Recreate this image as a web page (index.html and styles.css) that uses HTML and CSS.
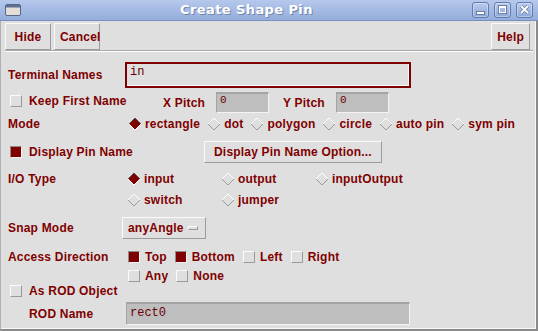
FILE: index.html
```html
<!DOCTYPE html>
<html lang="en">
<head>
    <meta charset="UTF-8">
    <meta name="viewport" content="width=device-width, initial-scale=1.0">
    <title>Create Shape Pin</title>
    <link rel="stylesheet" href="styles.css">
</head>
<body>
<div class="window">
    <div class="titlebar">
        <svg class="app-icon" width="16" height="12" viewBox="0 0 16 12">
            <rect x="0.5" y="0.5" width="15" height="11" rx="1.5" fill="#e4dfd6" stroke="#56688a"/>
            <rect x="1" y="1" width="14" height="2.5" fill="#5d6f92"/>
        </svg>
        <div class="title">Create Shape Pin</div>
        <div class="wm-buttons">
            <span class="wm-btn">
                <svg width="15" height="14" viewBox="0 0 15 14"><rect x="3.5" y="8.5" width="8" height="3" fill="#fff" stroke="#6b7fa6"/></svg>
            </span>
            <span class="wm-btn">
                <svg width="15" height="14" viewBox="0 0 15 14"><rect x="3.5" y="2.5" width="8" height="8" fill="none" stroke="#6b7fa6"/><rect x="4.5" y="3.5" width="6" height="6" fill="none" stroke="#fff"/><rect x="4" y="3" width="7" height="2" fill="#fff"/></svg>
            </span>
            <span class="wm-btn">
                <svg width="15" height="14" viewBox="0 0 15 14"><path d="M4 3 L11 10 M11 3 L4 10" stroke="#6b7fa6" stroke-width="3.4"/><path d="M4 3 L11 10 M11 3 L4 10" stroke="#fff" stroke-width="1.8"/></svg>
            </span>
        </div>
    </div>

    <div class="client">
        <div class="toolbar">
            <button class="btn btn-tool">Hide</button>
            <button class="btn btn-tool">Cancel</button>
            <span class="spacer"></span>
            <button class="btn btn-tool">Help</button>
        </div>
        <div class="separator"></div>

        <div class="form">
            <div class="row row-terminal">
                <span class="label label-terminal">Terminal Names</span>
                <div class="field field-name">in</div>
            </div>

            <div class="row row-pitch">
                <span class="check check-left keep"><span class="box"></span>Keep First Name</span>
                <span class="pitch-label">X Pitch</span>
                <div class="field field-grey field-pitch">0</div>
                <span class="pitch-label pitch-y">Y Pitch</span>
                <div class="field field-grey field-pitch">0</div>
            </div>

            <div class="row row-mode">
                <span class="label label-mode">Mode</span>
                <div class="options">
                    <span class="opt"><svg class="diamond" viewBox="0 0 14 14"><path d="M7 1 L13 7 L7 13 L1 7 Z" fill="#7f0000"/><path d="M1 7 L7 1 L13 7" fill="none" stroke="#5a4a4a"/><path d="M1 7 L7 13 L13 7" fill="none" stroke="#fff"/></svg>rectangle</span>
                    <span class="opt"><svg class="diamond" viewBox="0 0 14 14"><path d="M1 7 L7 1 L13 7" fill="none" stroke="#fff"/><path d="M1 7 L7 13 L13 7" fill="none" stroke="#9a9a9a"/></svg>dot</span>
                    <span class="opt"><svg class="diamond" viewBox="0 0 14 14"><path d="M1 7 L7 1 L13 7" fill="none" stroke="#fff"/><path d="M1 7 L7 13 L13 7" fill="none" stroke="#9a9a9a"/></svg>polygon</span>
                    <span class="opt"><svg class="diamond" viewBox="0 0 14 14"><path d="M1 7 L7 1 L13 7" fill="none" stroke="#fff"/><path d="M1 7 L7 13 L13 7" fill="none" stroke="#9a9a9a"/></svg>circle</span>
                    <span class="opt"><svg class="diamond" viewBox="0 0 14 14"><path d="M1 7 L7 1 L13 7" fill="none" stroke="#fff"/><path d="M1 7 L7 13 L13 7" fill="none" stroke="#9a9a9a"/></svg>auto pin</span>
                    <span class="opt"><svg class="diamond" viewBox="0 0 14 14"><path d="M1 7 L7 1 L13 7" fill="none" stroke="#fff"/><path d="M1 7 L7 13 L13 7" fill="none" stroke="#9a9a9a"/></svg>sym pin</span>
                </div>
            </div>

            <div class="row row-display">
                <span class="check check-left display"><span class="box checked"></span>Display Pin Name</span>
                <button class="btn btn-option">Display Pin Name Option...</button>
            </div>

            <div class="row row-io">
                <span class="label label-io">I/O Type</span>
                <div class="io-grid">
                    <span class="opt"><svg class="diamond" viewBox="0 0 14 14"><path d="M7 1 L13 7 L7 13 L1 7 Z" fill="#7f0000"/><path d="M1 7 L7 1 L13 7" fill="none" stroke="#5a4a4a"/><path d="M1 7 L7 13 L13 7" fill="none" stroke="#fff"/></svg>input</span>
                    <span class="opt"><svg class="diamond" viewBox="0 0 14 14"><path d="M1 7 L7 1 L13 7" fill="none" stroke="#fff"/><path d="M1 7 L7 13 L13 7" fill="none" stroke="#9a9a9a"/></svg>output</span>
                    <span class="opt"><svg class="diamond" viewBox="0 0 14 14"><path d="M1 7 L7 1 L13 7" fill="none" stroke="#fff"/><path d="M1 7 L7 13 L13 7" fill="none" stroke="#9a9a9a"/></svg>inputOutput</span>
                </div>
            </div>
            <div class="row row-io2">
                <span class="label label-io"></span>
                <div class="io-grid">
                    <span class="opt"><svg class="diamond" viewBox="0 0 14 14"><path d="M1 7 L7 1 L13 7" fill="none" stroke="#fff"/><path d="M1 7 L7 13 L13 7" fill="none" stroke="#9a9a9a"/></svg>switch</span>
                    <span class="opt"><svg class="diamond" viewBox="0 0 14 14"><path d="M1 7 L7 1 L13 7" fill="none" stroke="#fff"/><path d="M1 7 L7 13 L13 7" fill="none" stroke="#9a9a9a"/></svg>jumper</span>
                </div>
            </div>

            <div class="row row-snap">
                <span class="label label-snap">Snap Mode</span>
                <div class="btn dropdown">anyAngle<span class="indicator"></span></div>
            </div>

            <div class="row row-access">
                <span class="label label-access">Access Direction</span>
                <div class="checks">
                    <span class="check"><span class="box checked"></span>Top</span>
                    <span class="check"><span class="box checked"></span>Bottom</span>
                    <span class="check"><span class="box"></span>Left</span>
                    <span class="check"><span class="box"></span>Right</span>
                </div>
            </div>
            <div class="row row-access2">
                <span class="label label-access"></span>
                <div class="checks">
                    <span class="check"><span class="box"></span>Any</span>
                    <span class="check"><span class="box"></span>None</span>
                </div>
            </div>

            <div class="row row-rod">
                <span class="check check-left"><span class="box"></span>As ROD Object</span>
            </div>

            <div class="row row-rodname">
                <span class="label label-rodname">ROD Name</span>
                <div class="field field-grey field-rod">rect0</div>
            </div>
        </div>
    </div>
</div>
</body>
</html>
```

FILE: styles.css
```css
* {
    box-sizing: border-box;
}

body {
    margin: 0;
    background-color: #dfdfdf;
    font-family: "Liberation Sans", Arial, sans-serif;
    font-size: 12px;
    font-weight: bold;
    letter-spacing: 0.2px;
    color: #7f0000;
}

.window {
    width: 538px;
    height: 331px;
    display: flex;
    flex-direction: column;
    overflow: hidden;
}

/* title bar */
.titlebar {
    height: 21px;
    display: flex;
    align-items: center;
    background: linear-gradient(to bottom, #b6c8ec, #94addb);
    border-bottom: 1px solid #7890c0;
}

.app-icon {
    margin-left: 5px;
    margin-top: -1px;
}

.title {
    flex: 1;
    text-align: center;
    font-family: "DejaVu Sans", sans-serif;
    font-size: 13px;
    font-weight: bold;
    letter-spacing: 0.4px;
    color: #fff;
    text-shadow: 1px 1px 0 #7083aa;
    margin-top: -1px;
}

.wm-buttons {
    display: flex;
    gap: 5px;
    margin-right: 5px;
}

.wm-btn {
    width: 17px;
    height: 16px;
    border: 1px solid #5f7bb0;
    border-radius: 3px;
    background: linear-gradient(to bottom, #b9cbee, #8ea8d8);
    box-shadow: inset 0 0 0 1px rgba(255, 255, 255, 0.35);
    display: flex;
}

/* client area */
.client {
    flex: 1;
    display: flex;
    flex-direction: column;
    border-left: 1px solid #b0b0b0;
    border-right: 2px solid #8a8a8a;
    border-bottom: 2px solid #8a8a8a;
    box-shadow: inset -1px -1px 0 #f6f6f6;
}

.toolbar {
    display: flex;
    gap: 3px;
    padding: 2px 6px 0 4px;
}

.spacer {
    flex: 1;
}

.btn {
    font-family: inherit;
    font-size: 12px;
    font-weight: bold;
    letter-spacing: 0.2px;
    color: #7f0000;
    background-color: #dfdfdf;
    border: 1px solid;
    border-color: #fafafa #9c9c9c #9c9c9c #fafafa;
    margin: 0;
    padding: 0;
}

.btn-tool {
    height: 27px;
    min-width: 30px;
    padding: 0 5px;
}

.btn-tool:first-child,
.btn-tool:nth-child(2) {
    width: 46px;
}

.separator {
    margin: 0 3px 0 4px;
    border-top: 1px solid #a8a8a8;
    border-bottom: 1px solid #fff;
}

/* form */
.form {
    display: flex;
    flex-direction: column;
    padding-left: 7px;
}

.row {
    display: flex;
    align-items: center;
}

.label {
    flex: none;
}

.row-terminal { margin-top: 10px; height: 26px; }
.row-pitch    { margin-top: 4px;  height: 21px; }
.row-mode     { margin-top: 3px;  height: 15px; }
.row-display  { margin-top: 10px; height: 22px; }
.row-io       { margin-top: 9px;  height: 14px; }
.row-io2      { margin-top: 6px;  height: 15px; }
.row-snap     { margin-top: 10px; height: 22px; }
.row-access   { margin-top: 11px; height: 13px; }
.row-access2  { margin-top: 7px;  height: 12px; }
.row-rod      { margin-top: 3px;  height: 12px; }
.row-rodname  { margin-top: 5px;  height: 23px; }

.label-terminal { width: 117px; }
.label-mode     { width: 120px; }
.label-io       { width: 119px; }
.label-snap     { width: 114px; }
.label-access   { width: 120px; }
.label-rodname  { width: 97px; margin-left: 21px; }

/* fields */
.field {
    font-family: "Liberation Mono", "Courier New", monospace;
    font-weight: normal;
    letter-spacing: 0;
    color: #6a0000;
}

.field-name {
    width: 286px;
    height: 26px;
    border: 2px solid #7f0000;
    box-shadow: inset -1px -1px 0 #fff;
    padding: 1px 3px;
    font-size: 12px;
}

.field-grey {
    background-color: #bebebe;
    border-top: 2px solid #a4a4a4;
    border-left: 1px solid #a4a4a4;
    border-right: 1px solid #f4f4f4;
    border-bottom: 1px solid #f4f4f4;
}

.field-pitch {
    width: 53px;
    height: 21px;
    padding: 0 3px;
    font-size: 11px;
}

.field-rod {
    width: 284px;
    height: 23px;
    padding: 2px 3px;
    font-size: 12px;
}

.pitch-label {
    width: 53px;
}

.pitch-y {
    margin-left: 14px;
}

/* check boxes */
.check {
    display: flex;
    align-items: center;
    gap: 5px;
}

.check-left {
    margin-left: 2px;
    gap: 7px;
}

.keep {
    width: 153px;
    align-self: flex-start;
    margin-top: 2px;
}

.display {
    width: 194px;
}

.box {
    width: 12px;
    height: 12px;
    flex: none;
    background-color: #dfdfdf;
    border: 1px solid;
    border-color: #fbfbfb #9a9a9a #9a9a9a #fbfbfb;
}

.box.checked {
    background-color: #7f0000;
    border-color: #8c8c8c #f4f4f4 #f4f4f4 #8c8c8c;
}

.checks {
    display: flex;
    gap: 8px;
}

/* radio diamonds */
.options {
    display: flex;
    gap: 7px;
}

.opt {
    display: flex;
    align-items: center;
    gap: 3px;
}

.diamond {
    width: 14px;
    height: 14px;
    flex: none;
}

.io-grid {
    display: grid;
    grid-template-columns: 94px 94px 94px;
}

.btn-option {
    height: 22px;
    padding: 0 9px;
}

.dropdown {
    width: 84px;
    height: 22px;
    display: flex;
    align-items: center;
    justify-content: space-between;
    padding: 0 7px 0 5px;
}

.indicator {
    width: 10px;
    height: 4px;
    border: 1px solid;
    border-color: #fbfbfb #9a9a9a #9a9a9a #fbfbfb;
}
```
